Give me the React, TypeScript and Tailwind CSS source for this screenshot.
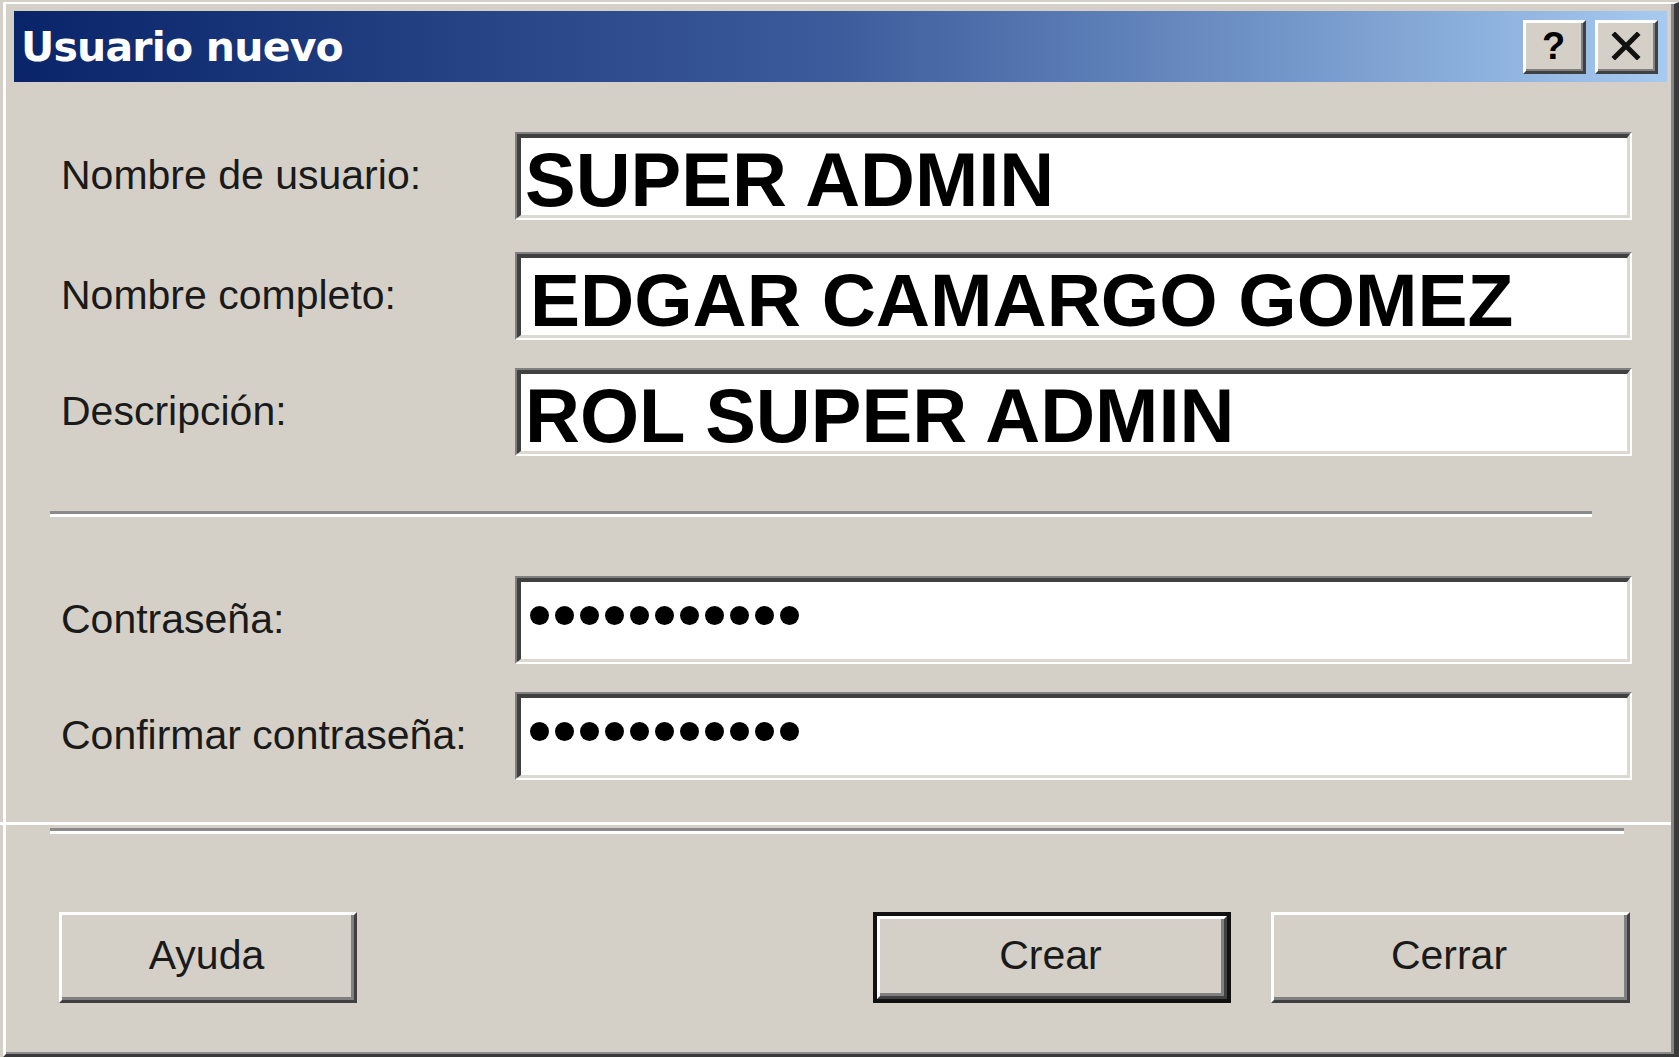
import React from "react";

const labelFont = { fontFamily: '"Liberation Sans", Arial, sans-serif' };

function Field({ value, pl, size, password }: { value?: string; pl: string; size?: string; password?: boolean }) {
  return (
    <div className="flex-1 h-[88px] border-t-2 border-l-2 border-t-[#808080] border-l-[#808080] border-b-2 border-r-2 border-b-white border-r-white">
      <div className="h-full bg-white border-t-[4px] border-l-[4px] border-t-[#404040] border-l-[#404040] border-b-[3px] border-r-[3px] border-b-[#dcd9d2] border-r-[#dcd9d2]">
        {password ? (
          <div className="h-full flex items-center gap-[6px] pl-[9px] pb-[10px]">
            {Array.from({ length: 11 }).map((_, i) => (
              <div key={i} className="w-[19px] h-[19px] rounded-full bg-black" />
            ))}
          </div>
        ) : (
          <div
            className={`${pl} ${size ?? "text-[76px]"} pt-[6px] leading-[72px] font-bold text-black whitespace-nowrap`}
            style={labelFont}
          >
            {value}
          </div>
        )}
      </div>
    </div>
  );
}

function Row({ label, children, mt }: { label: string; children: React.ReactNode; mt: string }) {
  return (
    <div className={`flex items-center ${mt} pl-[55px] pr-[39px]`}>
      <div className="w-[454px] text-[41px] text-[#1a1a1a] whitespace-nowrap" style={labelFont}>
        {label}
      </div>
      {children}
    </div>
  );
}

function RaisedButton({ label, w, isDefault }: { label: string; w: string; isDefault?: boolean }) {
  const inner = (
    <div className="h-full border-t-[3px] border-l-[3px] border-t-white border-l-white border-b-[3px] border-r-[3px] border-b-[#404040] border-r-[#404040]">
      <div className="h-full border-b-[3px] border-r-[3px] border-b-[#808080] border-r-[#808080] flex items-center justify-center text-[41px] text-[#1a1a1a]" style={labelFont}>
        {label}
      </div>
    </div>
  );
  if (isDefault) {
    return <div className={`${w} h-[91px] border-[4px] border-[#111]`}>{inner}</div>;
  }
  return <div className={`${w} h-[91px]`}>{inner}</div>;
}

function TitleButton({ children }: { children: React.ReactNode }) {
  return (
    <div className="w-[63px] h-[54px] bg-[#d4d0c8] border-t-[3px] border-l-[3px] border-t-white border-l-white border-b-[3px] border-r-[3px] border-b-[#404040] border-r-[#404040]">
      <div className="h-full border-b-[2px] border-r-[2px] border-b-[#808080] border-r-[#808080] flex items-center justify-center">
        {children}
      </div>
    </div>
  );
}

export default function App() {
  return (
    <div className="w-[1679px] h-[1057px] bg-[#d4d0c8] relative overflow-hidden flex">
      <div className="flex-1 flex mt-[2px] ml-[3px] border-t-[2px] border-l-[3px] border-t-white border-l-white border-r-[5px] border-r-[#3a3a3a] border-b-[3px] border-b-[#3a3a3a]">
        <div className="flex-1 flex flex-col border-r-[3px] border-r-[#858585] border-b-[2px] border-b-[#8a8a8a]">
          {/* Title bar */}
          <div className="mt-[7px] ml-[8px] mr-[4px] h-[71px] bg-gradient-to-r from-[#0a246a] via-[#3d5c9c] to-[#a6caf0] flex items-center pl-[7px] pr-[9px]">
            <div
              className="text-[41px] font-bold text-white whitespace-nowrap pt-[3px]"
              style={{ fontFamily: '"DejaVu Sans", Verdana, sans-serif', letterSpacing: "-0.8px" }}
            >
              Usuario nuevo
            </div>
            <div className="flex-1" />
            <div className="flex gap-[9px]">
              <TitleButton>
                <span className="text-[38px] font-bold text-black leading-none" style={labelFont}>
                  ?
                </span>
              </TitleButton>
              <TitleButton>
                <svg width="30" height="28" viewBox="0 0 30 28">
                  <path d="M4 3 L26 25 M26 3 L4 25" stroke="#111" strokeWidth="5" strokeLinecap="square" />
                </svg>
              </TitleButton>
            </div>
          </div>

          <Row label="Nombre de usuario:" mt="mt-[50px]">
            <Field value="SUPER ADMIN" pl="pl-[4px]" />
          </Row>
          <Row label="Nombre completo:" mt="mt-[32px]">
            <Field value="EDGAR CAMARGO GOMEZ" pl="pl-[9px]" size="text-[75px]" />
          </Row>
          <Row label="Descripción:" mt="mt-[28px]">
            <Field value="ROL SUPER ADMIN" pl="pl-[4px]" />
          </Row>

          <div className="mt-[55px] ml-[44px] w-[1542px]">
            <div className="h-[3px] bg-[#8a8a8a]" />
            <div className="h-[3px] bg-white" />
          </div>

          <Row label="Contraseña:" mt="mt-[59px]">
            <Field password pl="" />
          </Row>
          <Row label="Confirmar contraseña:" mt="mt-[28px]">
            <Field password pl="" />
          </Row>

          <div className="mt-[48px] ml-[44px] w-[1574px]">
            <div className="h-[3px] bg-[#8a8a8a]" />
            <div className="h-[3px] bg-white" />
          </div>

          <div className="mt-[78px] flex pl-[53px] pr-[41px]">
            <RaisedButton label="Ayuda" w="w-[298px]" />
            <div className="flex-1" />
            <div className="flex gap-[40px]">
              <RaisedButton label="Crear" w="w-[358px]" isDefault />
              <RaisedButton label="Cerrar" w="w-[359px]" />
            </div>
          </div>
        </div>
      </div>
      {/* stitched white seam across the screenshot */}
      <div className="absolute left-0 right-[8px] top-[822px] h-[3px] bg-white" />
    </div>
  );
}
